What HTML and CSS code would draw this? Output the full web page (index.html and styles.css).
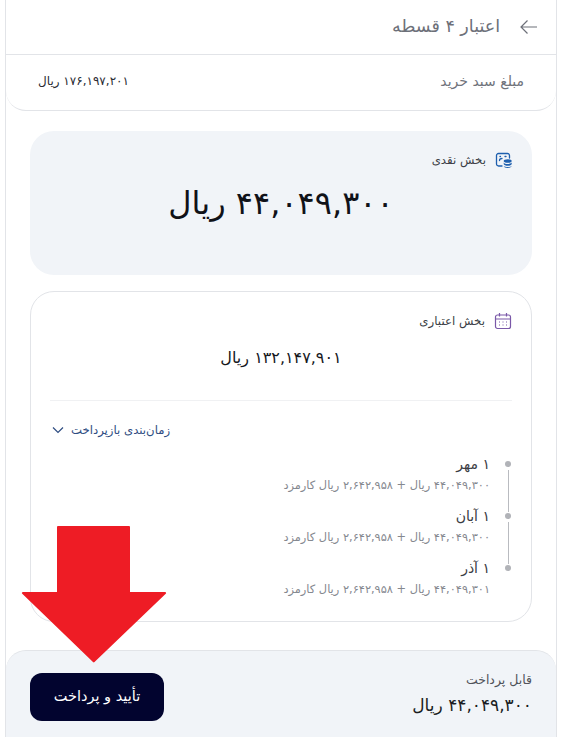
FILE: index.html
```html
<!DOCTYPE html>
<html lang="fa" dir="rtl">
<head>
<meta charset="utf-8">
<title>اعتبار ۴ قسطه</title>
<link rel="stylesheet" href="styles.css">
</head>
<body>
<main class="page">
  <section class="summary">
    <header class="topbar">
      <svg class="back" viewBox="0 0 18 18" width="18" height="18" aria-hidden="true"><path d="M1 9h16M10.500 2.500 17 9l-6.500 6.500"/></svg>
      <h1 class="title">اعتبار ۴ قسطه</h1>
    </header>
    <div class="basket">
      <span class="basket-label">مبلغ سبد خرید</span>
      <span class="basket-value">۱۷۶,۱۹۷,۲۰۱ ریال</span>
    </div>
  </section>

  <div class="content">
    <section class="cash">
      <div class="tag">
        <svg class="tag-icon" viewBox="0 0 18 18" width="18" height="18" aria-hidden="true">
          <path class="ic-blue" d="M7 15H3.500A2 2 0 0 1 1.500 13V4.500A2 2 0 0 1 3.500 2.500H12.500A2 2 0 0 1 14.500 4.500V7"/>
          <path class="ic-blue" d="M5 5.500h.5M10 5.500h1M4.500 9.500c0-1.300 1-2 2.500-2"/>
          <ellipse class="ic-fill" cx="12.700" cy="10" rx="4" ry="1.800"/>
          <path class="ic-fill" d="M8.700 11.500c.6 1 2.200 1.500 4 1.500s3.400-.5 4-1.500v1.500c-.3 1.100-2 1.800-4 1.800s-3.700-.7-4-1.800zM8.700 15c.8.700 2.300 1 4 1s3.200-.3 4-1c-.2 1-1.800 2-4 2s-3.800-1-4-2z"/>
        </svg>
        <span>بخش نقدی</span>
      </div>
      <p class="cash-amount">۴۴,۰۴۹,۳۰۰ ریال</p>
    </section>

    <section class="credit">
      <div class="tag">
        <svg class="tag-icon" viewBox="0 0 18 18" width="18" height="18" aria-hidden="true">
          <rect class="ic-purple" x="1.500" y="3" width="15" height="13.500" rx="2"/>
          <path class="ic-purple" d="M1.500 7h15M5.500 1v3.500M12.500 1v3.500"/>
          <path class="ic-dots" d="M5 10h1M8.500 10h1M12 10h1M5 13h1M8.500 13h1M12 13h1"/>
        </svg>
        <span>بخش اعتباری</span>
      </div>
      <p class="credit-amount">۱۳۲,۱۴۷,۹۰۱ ریال</p>
      <div class="toggle">
        <span>زمان‌بندی بازپرداخت</span>
        <svg viewBox="0 0 12 8" width="12" height="8" aria-hidden="true"><path d="M1 1.500 6 6.500l5-5"/></svg>
      </div>
      <ol class="plan">
        <li class="step">
          <strong>۱ مهر</strong>
          <span>۴۴,۰۴۹,۳۰۰ ریال + ۲,۶۴۲,۹۵۸ ریال کارمزد</span>
        </li>
        <li class="step">
          <strong>۱ آبان</strong>
          <span>۴۴,۰۴۹,۳۰۰ ریال + ۲,۶۴۲,۹۵۸ ریال کارمزد</span>
        </li>
        <li class="step">
          <strong>۱ آذر</strong>
          <span>۴۴,۰۴۹,۳۰۱ ریال + ۲,۶۴۲,۹۵۸ ریال کارمزد</span>
        </li>
      </ol>
    </section>
  </div>

  <footer class="paybar">
    <div class="due">
      <span class="due-label">قابل پرداخت</span>
      <span class="due-value">۴۴,۰۴۹,۳۰۰ ریال</span>
    </div>
    <button class="pay" type="button">تأیید و پرداخت</button>
  </footer>
</main>
<svg class="arrow" viewBox="0 0 146 138" width="146" height="138" aria-hidden="true">
  <path d="M36 1h72a1 1 0 0 1 1 1v65h35a1 1 0 0 1 1 1.500L73.500 137a1 1 0 0 1-1.500 0L1 68.500A1 1 0 0 1 2 67h34V2a1 1 0 0 1 1-1z"/>
</svg>
</body>
</html>
```
FILE: styles.css
```css
* { box-sizing: border-box; }
html, body { margin: 0; padding: 0; }
body {
  position: relative;
  width: 563px;
  height: 737px;
  overflow: hidden;
  background: #fff;
  font-family: "DejaVu Sans", "Noto Sans", sans-serif;
  color: #23252b;
}
.page {
  width: 552px;
  height: 737px;
  margin-right: 6px;
  margin-left: 5px;
  border-inline: 1px solid #e2e4e8;
  display: flex;
  flex-direction: column;
  overflow: hidden;
}
.summary {
  height: 111px;
  flex: none;
  border-bottom: 1px solid #e2e4e8;
  border-radius: 0 0 20px 20px;
}
.topbar {
  height: 55px;
  display: flex;
  align-items: center;
  gap: 20px;
  padding: 0 18px;
  border-bottom: 1px solid #e2e4e8;
}
.back { transform: scaleX(-1); }
.back path { fill: none; stroke: #6d7079; stroke-width: 1.200; }
.title { margin: 0 0 3px; font-size: 17.500px; font-weight: 400; color: #6d7079; }
.basket {
  height: 55px;
  display: flex;
  justify-content: space-between;
  align-items: center;
  padding: 0 32px 3px;
}
.basket-label { font-size: 14px; color: #70737b; }
.basket-value { font-size: 12px; color: #2a2c33; }
.content {
  flex: 1;
  padding: 20px 24px 28px 24px;
  display: flex;
  flex-direction: column;
  gap: 16px;
}
.cash {
  height: 144px;
  background: #f1f4f8;
  border-radius: 24px;
  padding: 20px 19px;
}
.tag {
  display: flex;
  align-items: center;
  gap: 9px;
  font-size: 11.800px;
  color: #3c3f46;
}
.tag-icon { flex: none; }
.ic-blue { fill: none; stroke: #1e5fae; stroke-width: 1.300; stroke-linecap: round; }
.ic-fill { fill: #1e5fae; }
.ic-purple { fill: none; stroke: #7a58a8; stroke-width: 1.200; }
.ic-dots { fill: none; stroke: #7a58a8; stroke-width: 1.200; }
.cash-amount {
  margin: 14px 0 0;
  text-align: center;
  font-size: 32px;
  line-height: 40px;
  color: #101218;
}
.credit {
  height: 331px;
  border: 1px solid #e2e4e8;
  border-radius: 24px;
  padding: 20px 19px 0;
}
.credit-amount {
  margin: 16px 0 0;
  padding-bottom: 30px;
  text-align: center;
  font-size: 16px;
  line-height: 24px;
  color: #15171d;
  border-bottom: 1px solid #f0f1f3;
}
.toggle {
  margin-top: 22px;
  padding-left: 2px;
  display: flex;
  justify-content: flex-end;
  align-items: center;
  gap: 7px;
  font-size: 11.700px;
  color: #2f4d82;
}
.toggle path { fill: none; stroke: #2f4d82; stroke-width: 1.200; }
.plan {
  list-style: none;
  margin: 18px 0 0;
  padding: 0;
  display: flex;
  flex-direction: column;
  gap: 9px;
}
.step {
  position: relative;
  height: 43px;
  padding-right: 22px;
  display: flex;
  flex-direction: column;
  gap: 3px;
}
.step::before {
  content: "";
  position: absolute;
  right: 1px;
  top: 6px;
  width: 6px;
  height: 6px;
  border-radius: 50%;
  background: #b1b3b8;
}
.step:not(:last-child)::after {
  content: "";
  position: absolute;
  right: 3px;
  top: 15px;
  width: 1px;
  height: 42px;
  background: #b9bbc0;
}
.step strong { font-size: 14px; font-weight: 400; line-height: 18px; color: #3a3c43; }
.step span { font-size: 11.400px; line-height: 18px; color: #85888f; white-space: nowrap; }
.paybar {
  flex: none;
  height: 87px;
  background: #f1f4f8;
  border-top: 1px solid #e2e4e8;
  border-radius: 20px 20px 0 0;
  padding: 22px 24px 0 24px;
  display: flex;
  justify-content: space-between;
  align-items: flex-start;
}
.due { display: flex; flex-direction: column; gap: 7px; margin-top: -1px; }
.due-label { font-size: 12.500px; line-height: 16px; color: #50535a; }
.due-value { font-size: 17px; line-height: 20px; color: #1a1c22; }
.pay {
  width: 134px;
  height: 48px;
  padding: 0 0 3px;
  border: 0;
  border-radius: 12px;
  background: #02042f;
  color: #fff;
  font: inherit;
  font-size: 14.500px;
}
.arrow { position: absolute; left: 21px; top: 525px; }
.arrow path { fill: #ee1c25; }
```
